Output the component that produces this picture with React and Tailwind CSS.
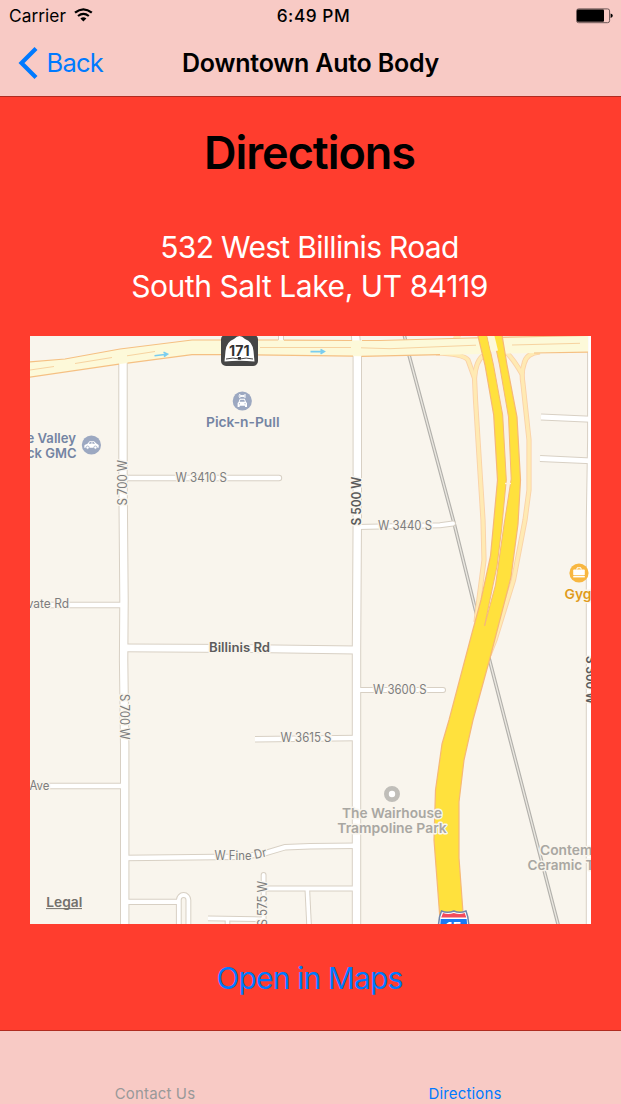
import React from "react";

const LAND = "#f9f5ed";

const minorRoads = [
  { d: "M123 361V480L124 600L123.6 660L124.7 745V930", w: 7.4 },
  { d: "M355 330L357.3 354V520L356.5 650V930", w: 7.4 },
  { d: "M281 336V344", w: 4 },
  { d: "M124 478H279", w: 4.4, round: true },
  { d: "M357 527L440 525.3L453 523.5", w: 4, round: true },
  { d: "M357 690H443", w: 4, round: true },
  { d: "M20 605H124", w: 4.6 },
  { d: "M124 647.8L240 648.5L356 650", w: 6.8 },
  { d: "M255 739.2L356 738", w: 4.6 },
  { d: "M20 786H124", w: 4.4 },
  { d: "M124 858L240 856.7L262 854L285 847.3L310 846.2L356 845.7", w: 4.4 },
  { d: "M124 901.8H178", w: 4.2 },
  { d: "M178.8 930V900A4.8 5 0 0 1 188.4 900V930", w: 3.8 },
  { d: "M263.6 875V930", w: 3.8, round: true },
  { d: "M265 888.6H356", w: 4 },
  { d: "M307.3 889L309.3 930", w: 3.6 },
  { d: "M208 918.3L262 919.3", w: 3.8 },
  { d: "M227.5 919V930", w: 3.6 },
  { d: "M541 417L592 419.3", w: 4.8 },
  { d: "M540 458.5L592 461", w: 4.8 },
  { d: "M592.3 330V440L591 520V930", w: 8.4 },
];

function MinorRoads() {
  return (
    <g fill="none">
      {minorRoads.map((r, i) => (
        <path key={i} d={r.d} stroke="#d8d0c4" strokeWidth={r.w + 2} strokeLinecap={r.round ? "round" : "butt"} />
      ))}
      {minorRoads.map((r, i) => (
        <path key={i} d={r.d} stroke="#ffffff" strokeWidth={r.w} strokeLinecap={r.round ? "round" : "butt"} />
      ))}
    </g>
  );
}

const ramps = [
  "M436 353Q464 354 468 360L474.5 378L475.5 400L483 520L484 560L476 622",
  "M484 355Q476 360 474.5 378",
  "M540 352Q526 353 524 364Q521 372 523 384L529 440V490L525 520L513.5 580L495 640L489 655",
  "M507 353Q514 360 522 374",
  "M454 336L460 338",
];

function Label({ x, y, w, children, size = 12.6, color = "#7d7d7d", weight = 400, transform, anchor = "start", halo = LAND }) {
  return (
    <text
      x={x}
      y={y}
      textLength={w}
      lengthAdjust="spacingAndGlyphs"
      fontSize={size}
      fontWeight={weight}
      fill={color}
      stroke={halo}
      strokeWidth="3"
      strokeLinejoin="round"
      paintOrder="stroke"
      textAnchor={anchor}
      transform={transform}
    >
      {children}
    </text>
  );
}

function Place(props) {
  return <Label size={13.6} weight={600} {...props} />;
}

function MapView() {
  return (
    <svg viewBox="30 336 561 588" className="block h-[588px] w-[561px] overflow-hidden font-[Inter,sans-serif]">
      <rect x="30" y="336" width="561" height="588" fill={LAND} />

      {/* railway */}
      <path d="M404 334L409 355L454 523L476 612L489 658L505 720L558.5 926" fill="none" stroke="#b3b1ac" strokeWidth="3.6" />
      <path d="M404 334L409 355L454 523L476 612L489 658L505 720L558.5 926" fill="none" stroke="#ebe8e1" strokeWidth="1.3" />

      <MinorRoads />

      {/* freeway ramps */}
      <g fill="none">
        {ramps.map((d) => <path key={d} d={d} stroke="#fad2a8" strokeWidth="5.2" />)}
      </g>
      <g fill="none">
        {ramps.map((d) => <path key={d} d={d} stroke="#ffeab3" strokeWidth="3.4" />)}
      </g>

      {/* state route 171 */}
      <path d="M28 362L65 359L120 349L192 340H240L380 340.5L470 338L588 335.5V352.2L540 353L360 356.3L240 354.6H192L120 364L28 377.4Z" fill="#fdf9d9" />
      <path
        d="M28 362L65 359L120 349L192 340H278M284 340.2L352 340.5M362 340.5H380L470 338L588 335.5M588 352.2L534 353M440 354.7L361.5 356.3M353 356.2L240 354.6H192L127.5 363.2M119 364.2L28 377.4"
        fill="none" stroke="#f5c083" strokeWidth="1.2"
      />
      <path d="M30 370L54 366.5M75 363.5L112 357.5M127 355.8L155 351.5M260 347.5H351M361 347.8L390 348.7L476 345.2M512 345L580 343.3" fill="none" stroke="#f7d3a0" strokeWidth="1" />

      {/* interstate 15 */}
      <path
        d="M477 332L485 365L493.7 415L497.5 480L493.3 526L490.5 556L481 600L472 633L449 720L442 744L435.5 790L434 840L440.5 926H464L459 858V802L464 760L473 720L490 658L511 577L518 524L520.5 480L517 417L507 365L501.5 332Z"
        fill="#ffe13d" stroke="#f6b876" strokeWidth="1.2"
      />
      <path
        d="M486.2 332L493.5 365L502.7 415L506.3 480L501.5 530L497 566L484.5 626L495.5 585L504 525L511.2 479L508.5 417L499.5 365L492.5 332Z"
        fill="#f9f1e6" stroke="#f6b876" strokeWidth="1"
      />
      <path d="M486.5 332L491 352L498 350.5L493.5 332Z" fill="#fdf9d9" />
      <path d="M505 483.5H511" stroke="#fff1d9" strokeWidth="1.3" />

      {/* one-way arrows */}
      <g fill="none" stroke="#79cdf0" strokeWidth="1.6">
        <path d="M154.5 355.8L167 354.2M163.5 352.3L167.5 354.1L164 356.6" />
        <path d="M310.5 351.6H324M320.5 349.5L324.3 351.6L320.5 353.8" />
      </g>

      {/* route 171 shield */}
      <rect x="221" y="334.5" width="37" height="31.5" rx="5" fill="#464646" />
      <path d="M224.5 361.5L225.5 351Q226.5 341.5 234 339Q237 336 239.5 336Q242 336 245 339Q252.5 341.5 253.5 351L254.5 361.5Q239.5 360.2 224.5 361.5Z" fill="#fff" />
      <path d="M226 359Q233 357.2 239.5 359Q246 357.2 253 359" fill="none" stroke="#464646" strokeWidth="1" />
      <rect x="237.9" y="357" width="3" height="2.6" fill="#333" />
      <text x="239.3" y="356" textAnchor="middle" textLength="20.5" lengthAdjust="spacingAndGlyphs" fontSize="14.5" fontWeight="700" fill="#333">171</text>

      {/* road labels */}
      <Label x={175.5} y={482} w={51.5}>W 3410 S</Label>
      <Label x={378} y={530} w={54}>W 3440 S</Label>
      <Label x={373} y={693.8} w={53.5}>W 3600 S</Label>
      <Label x={280.5} y={741.8} w={51}>W 3615 S</Label>
      <Label x={69} y={608.2} w={57.5} anchor="end">Private Rd</Label>
      <Label x={29.5} y={789.5} w={20}>Ave</Label>
      <Label x={214.5} y={860.2} w={37}>W Fine</Label>
      <Label x={255} y={859} w={12.5} transform="rotate(-12 255 859)">Dr</Label>
      <Label x={0} y={0} w={45.5} transform="translate(127.2 505.5) rotate(-90)">S 700 W</Label>
      <Label x={0} y={0} w={45.5} transform="translate(120.4 694) rotate(90)">S 700 W</Label>
      <Label x={0} y={0} w={49} weight={600} color="#5c5c5c" transform="translate(360.8 525.5) rotate(-90)">S 500 W</Label>
      <Label x={0} y={0} w={45.5} transform="translate(267.2 926.5) rotate(-90)">S 575 W</Label>
      <Label x={0} y={0} w={48} weight={600} color="#5c5c5c" transform="translate(586.4 656) rotate(90)">S 300 W</Label>
      <Label x={209} y={651.7} w={61} weight={600} color="#5c5c5c">Billinis Rd</Label>

      {/* places */}
      <g>
        <circle cx="242.3" cy="401" r="9.6" fill="#9ca8c1" />
        <path d="M238.5 396L246 396M239 394.5L245.5 397.5M245.5 394.5L239 397.5" stroke="#fff" strokeWidth="1" fill="none" />
        <path fillRule="evenodd" d="M239.8 398.8H244.8L246 402L247 403V407H245V405.8H239.6V407H237.6V403L238.6 402ZM240.4 399.8L239.7 401.8H244.9L244.2 399.8ZM239.4 403.2A.6.6 0 1 0 239.5 403.2ZM245 403.2A.6.6 0 1 0 245.1 403.2Z" fill="#fff" />
        <Place x={206} y={427} w={73.5} color="#7484a3">Pick-n-Pull</Place>

        <circle cx="91.4" cy="445" r="9.6" fill="#9ca8c1" />
        <path fillRule="evenodd" d="M84.5 445L87.5 443.8L89.5 441.2H94L96.7 443.7L98.7 445V447.8H84.2ZM88.8 443.8H91.5V442.1H89.9ZM92.4 443.8H95L93.6 442.1H92.4Z" fill="#fff" />
        <circle cx="87.6" cy="447.6" r="1.6" fill="#fff" stroke="#9ca8c1" strokeWidth=".8" />
        <circle cx="95.4" cy="447.6" r="1.6" fill="#fff" stroke="#9ca8c1" strokeWidth=".8" />
        <Place x={76} y={442.7} w={49.5} color="#7484a3" anchor="end">e Valley</Place>
        <Place x={76.5} y={457.7} w={57.5} color="#7484a3" anchor="end">uck GMC</Place>
      </g>

      <circle cx="579" cy="573" r="9.6" fill="#f8b741" />
      <rect x="573.2" y="569.6" width="11.6" height="5.6" rx=".8" fill="#fff" />
      <rect x="573.2" y="576" width="11.6" height="1.4" fill="#fff" />
      <path d="M576.5 569.5L577.5 567.7H580.5L581.5 569.5" fill="none" stroke="#fff" strokeWidth="1.1" />
      <Place x={564.5} y={599.2} w={54.5} color="#e09b1c">Gygi Inc</Place>

      <circle cx="392" cy="794" r="5.6" fill="#fff" stroke="#c0beb9" strokeWidth="4.8" />
      <Place x={342} y={818.3} w={100} color="#a9a7a2">The Wairhouse</Place>
      <Place x={337.3} y={833.3} w={109.5} color="#a9a7a2">Trampoline Park</Place>
      <Place x={540} y={855.2} w={96.5} color="#a9a7a2">Contemporary</Place>
      <Place x={527.5} y={870} w={82} color="#a9a7a2">Ceramic Tile</Place>

      {/* I-15 shield */}
      <path d="M441.5 911Q447.5 913.5 453.8 911Q460 913.5 466 911Q468.5 917 468.8 926H438.5Q438.8 917 441.5 911Z" fill="#fff" stroke="#6f85ad" strokeWidth="1.5" />
      <path d="M443 913Q448 915.2 453.8 913Q459.5 915.2 464.7 913L466.3 917.5H441.2Z" fill="#f24a5c" />
      <path d="M440.7 919H466.7L467.2 926H440.3Z" fill="#197af5" />
      <text x="453.8" y="931.5" textAnchor="middle" textLength="15.5" lengthAdjust="spacingAndGlyphs" fontSize="13.5" fontWeight="700" fill="#fff">15</text>

      <Place x={46.3} y={906.8} w={36} color="#73716d">Legal</Place>
      <path d="M46 908.6H82" stroke="#73716d" strokeWidth="1" />
    </svg>
  );
}

function WifiIcon() {
  return (
    <svg viewBox="0 0 19 14" className="relative -top-px h-[14px] w-[19px]" fill="none" stroke="#000">
      <path d="M1 4.7Q9.4-2 17.8 4.7" strokeWidth="2.3" />
      <path d="M4 8Q9.4 3.8 14.8 8" strokeWidth="2.2" />
      <path d="M6.4 10.4Q9.4 8 12.4 10.4L9.4 13.4Z" fill="#000" stroke="none" />
    </svg>
  );
}

function BatteryIcon() {
  return (
    <svg viewBox="0 0 37 16" className="h-[16px] w-[37px]">
      <rect x=".6" y=".9" width="33" height="13.8" rx="2" fill="none" stroke="#6b5756" />
      <rect x="1" y="1.4" width="27" height="12.4" rx="1" />
      <path d="M34.6 5.6Q36.8 6.2 36.8 7.8Q36.8 9.4 34.6 10Z" />
    </svg>
  );
}

export default function App() {
  return (
    <div className="flex h-[1104px] w-[621px] flex-col overflow-hidden bg-[#ff3d2e] font-[Inter,sans-serif] text-black">
      <header className="h-[97px] shrink-0 border-b border-[#b02b20] bg-[#f8cac5]">
        <div className="grid h-8 grid-cols-3 items-center pl-[9px] pr-[8px]">
          <div className="flex items-center gap-[8px]">
            <span className="text-[17.3px] leading-8 tracking-[0.05px]">Carrier</span>
            <WifiIcon />
          </div>
          <span className="pl-[5px] text-center text-[17.3px] font-medium leading-8 tracking-[0.55px]">6:49 PM</span>
          <div className="flex justify-end"><BatteryIcon /></div>
        </div>
        <div className="grid h-16 grid-cols-[150px_1fr_150px] items-center pb-[2px]">
          <button className="flex items-center gap-[8.5px] pl-[18px] text-[#007aff]">
            <svg viewBox="0 0 20 32" className="h-[32px] w-[20px]" fill="none" stroke="currentColor" strokeWidth="4.2">
              <path d="M18 1.5L3.5 16L18 30.5" />
            </svg>
            <span className="text-[25.5px] leading-8 tracking-[-0.8px]">Back</span>
          </button>
          <h1 className="whitespace-nowrap text-center text-[25px] font-semibold leading-8 tracking-[-0.22px]">Downtown Auto Body</h1>
        </div>
      </header>

      <main className="flex flex-1 flex-col items-center">
        <h2 className="mt-[26px] pr-[2px] text-[45px] font-semibold leading-[60px] tracking-[-1.05px]">Directions</h2>
        <p className="mt-[45px] whitespace-nowrap pr-[2px] text-center text-[30px] leading-[39px] text-white">
          <span className="block tracking-[-0.68px]">532 West Billinis Road</span>
          <span className="block tracking-[-0.44px]">South Salt Lake, UT 84119</span>
        </p>
        <div className="mt-[30px]"><MapView /></div>
        <button className="mt-[34px] pr-[2px] text-[30px] leading-10 tracking-[-0.87px] text-[#007aff]">Open in Maps</button>
      </main>

      <nav className="grid h-[74px] shrink-0 grid-cols-2 items-end border-t border-[#b02b20] bg-[#f8cac5] pr-px text-center text-[15px] leading-5 tracking-[0.15px]">
        <span className="text-[#999]">Contact Us</span>
        <span className="text-[#007aff]">Directions</span>
      </nav>
    </div>
  );
}
